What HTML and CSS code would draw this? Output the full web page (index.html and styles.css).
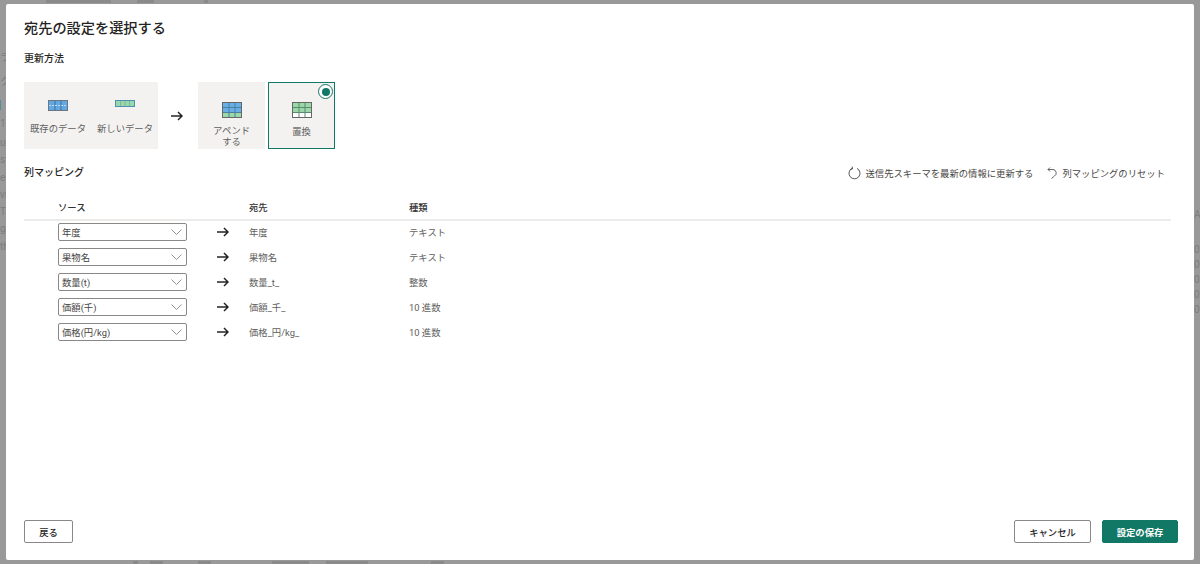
FILE: index.html
```html
<!DOCTYPE html>
<html lang="ja">
<head>
<meta charset="utf-8">
<title>宛先の設定を選択する</title>
<link rel="stylesheet" href="styles.css">
</head>
<body>
<div class="backdrop">
  <div class="bg-strip bg-top"><i class="t1"></i><i class="t2"></i><i class="t3"></i></div>
  <div class="bg-left">
    <span class="l-ra">ラ</span><span class="l-ku">ク</span><span class="bg-mark"></span><span class="l-one">1</span><span>ue</span><span>st</span><span>el</span><span>vi</span><span>Ta</span><span>g</span><span>th</span>
  </div>
  <div class="bg-right"><span class="r-a">A</span><span>0</span><span>0</span><span>0</span><span>0</span><span>0</span></div>
  <div class="bg-strip bg-bottom"><i class="b1"></i><i class="b2"></i><i class="b3"></i><i class="b4"></i><i class="b5"></i><i class="b6"></i></div>
</div>
<main class="modal">
  <h1 class="title">宛先の設定を選択する</h1>
  <h2 class="section method-label">更新方法</h2>
  <div class="methods">
    <div class="source-card">
      <div class="source-item">
        <svg class="ico" width="20" height="11" viewBox="0 0 20 11"><rect x=".5" y=".5" width="19" height="10" fill="#62a8e2" stroke="#6b7680"/><path d="M7 1v9M13 1v9" stroke="#3f6f99"/><path d="M1 5.500h18" stroke="#bcd9f0" stroke-dasharray="2 1"/></svg>
        <span>既存のデータ</span>
      </div>
      <div class="source-item new">
        <svg class="ico" width="20" height="7" viewBox="0 0 20 7"><rect x=".5" y=".5" width="19" height="6" fill="#9bd8a8" stroke="#4d8fb5"/><path d="M5.500 1v5M10 1v5M14.500 1v5" stroke="#7db5a8"/></svg>
        <span>新しいデータ</span>
      </div>
    </div>
    <svg class="big-arrow" width="12" height="10" viewBox="0 0 12 10"><path d="M0 5h11M7 1l4 4-4 4" fill="none" stroke="#252423" stroke-width="1.500"/></svg>
    <div class="option">
      <svg class="opt-ico" width="20" height="16" viewBox="0 0 20 16"><rect x=".5" y=".5" width="19" height="15" fill="#68aee6" stroke="#666"/><rect x="1" y="11" width="18" height="4" fill="#9bd8a8"/><path d="M7 1v14M13 1v14M1 5.500h18M1 10.500h18" stroke="#4a7f9f"/></svg>
      <span class="opt-label">アペンド<br>する</span>
    </div>
    <div class="option selected">
      <span class="radio"><span class="radio-dot"></span></span>
      <svg class="opt-ico" width="20" height="16" viewBox="0 0 20 16"><rect x=".5" y=".5" width="19" height="15" fill="#9bd8a8" stroke="#666"/><rect x="1" y="11" width="18" height="4" fill="#fff"/><path d="M7 1v14M13 1v14M1 5.500h18M1 10.500h18" stroke="#5a8a70"/></svg>
      <span class="opt-label">置換</span>
    </div>
  </div>

  <div class="mapping-head">
    <h2 class="section">列マッピング</h2>
    <div class="actions">
      <span class="action">
        <svg width="13" height="14" viewBox="0 0 13 14"><path d="M4 2.400A5.500 5.500 0 1 0 9 2.400M4.200 .6l.3 2.300-2.200.5" fill="none" stroke="#444" stroke-width=".9"/></svg>
        送信先スキーマを最新の情報に更新する
      </span>
      <span class="action">
        <svg width="11" height="12" viewBox="0 0 11 12"><path d="M1 2.500h5a3.500 3.500 0 0 1 1.500 6.500L4.500 11.500M3 .5 1 2.500l2 2" fill="none" stroke="#555" stroke-width=".9"/></svg>
        列マッピングのリセット
      </span>
    </div>
  </div>

  <div class="grid header">
    <span>ソース</span><span></span><span>宛先</span><span>種類</span>
  </div>
  <div class="rows">
    <div class="grid row">
      <div class="select"><span>年度</span><svg width="11" height="6" viewBox="0 0 11 6"><path d="M.5.500l5 5 5-5" fill="none" stroke="#777" stroke-width=".8"/></svg></div>
      <svg class="arrow" width="12" height="10" viewBox="0 0 12 10"><path d="M0 5h11M7 1l4 4-4 4" fill="none" stroke="#252423" stroke-width="1.500"/></svg>
      <span class="cell">年度</span><span class="cell">テキスト</span>
    </div>
    <div class="grid row">
      <div class="select"><span>果物名</span><svg width="11" height="6" viewBox="0 0 11 6"><path d="M.5.500l5 5 5-5" fill="none" stroke="#777" stroke-width=".8"/></svg></div>
      <svg class="arrow" width="12" height="10" viewBox="0 0 12 10"><path d="M0 5h11M7 1l4 4-4 4" fill="none" stroke="#252423" stroke-width="1.500"/></svg>
      <span class="cell">果物名</span><span class="cell">テキスト</span>
    </div>
    <div class="grid row">
      <div class="select"><span>数量(t)</span><svg width="11" height="6" viewBox="0 0 11 6"><path d="M.5.500l5 5 5-5" fill="none" stroke="#777" stroke-width=".8"/></svg></div>
      <svg class="arrow" width="12" height="10" viewBox="0 0 12 10"><path d="M0 5h11M7 1l4 4-4 4" fill="none" stroke="#252423" stroke-width="1.500"/></svg>
      <span class="cell">数量_t_</span><span class="cell">整数</span>
    </div>
    <div class="grid row">
      <div class="select"><span>価額(千)</span><svg width="11" height="6" viewBox="0 0 11 6"><path d="M.5.500l5 5 5-5" fill="none" stroke="#777" stroke-width=".8"/></svg></div>
      <svg class="arrow" width="12" height="10" viewBox="0 0 12 10"><path d="M0 5h11M7 1l4 4-4 4" fill="none" stroke="#252423" stroke-width="1.500"/></svg>
      <span class="cell">価額_千_</span><span class="cell">10 進数</span>
    </div>
    <div class="grid row">
      <div class="select"><span>価格(円/kg)</span><svg width="11" height="6" viewBox="0 0 11 6"><path d="M.5.500l5 5 5-5" fill="none" stroke="#777" stroke-width=".8"/></svg></div>
      <svg class="arrow" width="12" height="10" viewBox="0 0 12 10"><path d="M0 5h11M7 1l4 4-4 4" fill="none" stroke="#252423" stroke-width="1.500"/></svg>
      <span class="cell">価格_円/kg_</span><span class="cell">10 進数</span>
    </div>
  </div>

  <footer class="footer">
    <button class="btn back">戻る</button>
    <div class="footer-right">
      <button class="btn cancel">キャンセル</button>
      <button class="btn primary">設定の保存</button>
    </div>
  </footer>
</main>
</body>
</html>
```
FILE: styles.css
```css
* { box-sizing: border-box; }
html, body { height: 100%; }
body {
  margin: 0;
  padding: 4px 6px;
  overflow: hidden;
  background: #999;
  font-family: Roboto, "Noto Sans CJK JP", sans-serif;
  font-size: 9.33px;
  color: #323130;
}
.backdrop { position: absolute; inset: 0; overflow: hidden; color: #7d7d7d; font-size: 10px; }
.bg-strip { position: absolute; left: 0; height: 3px; display: flex; }
.bg-strip i { display: block; height: 3px; background: #8a8a8a; }
.bg-top { top: 0; }
.bg-bottom { bottom: 0; }
.t1 { width: 65px; margin-left: 46px; }
.t2 { width: 17px; margin-left: 26px; }
.t3 { width: 4px; margin-left: 50px; }
.b1 { width: 5px; margin-left: 133px; }
.b2 { width: 13px; margin-left: 12px; }
.b3 { width: 13px; margin-left: 35px; }
.b4 { width: 37px; margin-left: 61px; }
.b5 { width: 42px; margin-left: 17px; }
.b6 { width: 13px; margin-left: 63px; }
.bg-left { position: absolute; top: 52px; left: 0; width: 6px; display: flex; flex-direction: column; line-height: 12px; white-space: nowrap; overflow: hidden; }
.bg-left span { height: 12px; margin-bottom: 5.300px; flex: none; }
.bg-left .l-ra, .bg-left .l-ku { margin-bottom: 12px; }
.bg-left .bg-mark { width: 1px; height: 10px; background: #4f8f96; margin-bottom: 8px; }
.bg-left .l-one { margin-bottom: 7px; }
.bg-right { position: absolute; top: 209px; left: 1194px; width: 6px; display: flex; flex-direction: column; line-height: 12px; overflow: hidden; }
.bg-right span { height: 12px; margin-bottom: 3px; flex: none; }
.bg-right .r-a { margin-bottom: 23px; }
.modal {
  position: relative;
  height: 556px;
  background: #fff;
  border-radius: 2px;
  padding: 14px 16px 17px 18px;
  display: flex;
  flex-direction: column;
}
.title { margin: 0; font-size: 14.2px; font-weight: 500; line-height: 21px; color: #252423; }
.section { margin: 0; font-size: 10px; font-weight: 500; line-height: 14px; color: #252423; }
.method-label { margin-top: 13px; }
.methods { display: flex; align-items: center; margin-top: 16px; height: 67px; }
.source-card {
  width: 134px; height: 67px; background: #f3f2f1; flex: none;
  display: flex; gap: 11px; padding: 18px 0 0 6px;
}
.source-item {
  width: 56px; display: flex; flex-direction: column; align-items: center;
  color: #605e5c; white-space: nowrap;
}
.source-item .ico { display: block; flex: none; }
.source-item span { margin-top: 11px; line-height: 14px; }
.source-item.new span { margin-top: 15px; }
.big-arrow { margin: 0 15px 0 13px; flex: none; }
.option {
  width: 67px; height: 67px; background: #f3f2f1; margin-right: 3px;
  display: flex; flex-direction: column; align-items: center;
  padding-top: 20px; text-align: center; color: #605e5c; line-height: 11px;
  position: relative;
}
.option .opt-ico { flex: none; }
.opt-label { margin-top: 7px; }
.option.selected { border: 1px solid #117865; padding-top: 19px; }
.option.selected .opt-label { margin-top: 8px; }
.radio {
  position: absolute; top: 1px; right: 1px; width: 15px; height: 15px;
  border: 1px solid #117865; border-radius: 50%; background: #fff;
  display: flex; align-items: center; justify-content: center;
}
.radio-dot { width: 8px; height: 8px; border-radius: 50%; background: #117865; }
.mapping-head {
  display: flex; justify-content: space-between; align-items: center;
  margin-top: 17px; height: 14px;
  padding-right: 13px;
}
.actions { display: flex; gap: 14px; color: #484644; }
.action { display: flex; align-items: center; gap: 4px; white-space: nowrap; }
.grid { display: grid; grid-template-columns: 129px 62px 160px 1fr; align-items: center; padding-left: 34px; }
.header {
  margin-top: 20px; height: 21px; padding-bottom: 6px;
  border-bottom: 2px solid #edebe9; margin-right: 7px;
  font-weight: 500; color: #323130;
}
.rows { display: flex; flex-direction: column; margin-top: -2px; }
.row { height: 25px; color: #605e5c; }
.select {
  width: 129px; height: 18px; border: 1px solid #8a8886; border-radius: 2px;
  display: flex; align-items: center; justify-content: space-between;
  padding: 0 4px 0 3px; color: #484644; background: #fff;
}
.arrow { margin-left: 30px; }
.cell { white-space: nowrap; }
.footer { margin-top: auto; display: flex; justify-content: space-between; align-items: center; }
.footer-right { display: flex; gap: 11px; }
.btn {
  font: inherit; height: 23px; border-radius: 2px; border: 1px solid #8a8886; background: #fff;
  color: #252423; padding: 0; font-weight: 500;
}
.back { width: 49px; }
.cancel { width: 77px; }
.primary { width: 76px; background: #117865; border-color: #117865; color: #fff; font-weight: 700; }
```
